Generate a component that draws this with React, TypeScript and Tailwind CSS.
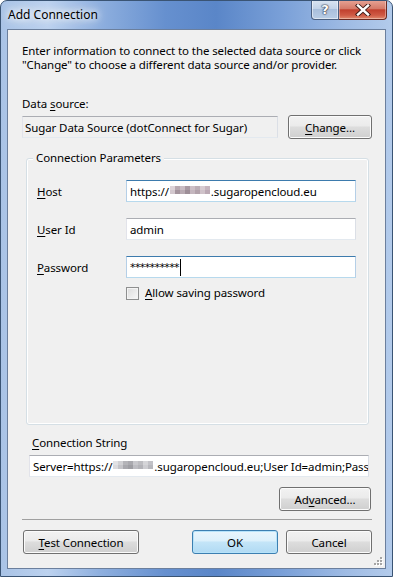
import React from "react";

const FONT = { fontFamily: '"Noto Sans", "Open Sans", sans-serif' };

function U({ children }: { children: React.ReactNode }) {
  return <span className="underline underline-offset-[2px] decoration-[1px]">{children}</span>;
}

function Btn({
  children,
  w,
  def,
}: {
  children: React.ReactNode;
  w: string;
  def?: boolean;
}) {
  return (
    <div
      className={
        "h-[24px] rounded-[3px] border flex items-center justify-center text-[11.5px] tracking-[-0.1px] leading-[15px] text-black " +
        w +
        (def
          ? " border-[#3c7fb1] bg-[linear-gradient(#e9f5fc_0%,#dcf0fb_45%,#c4e5f8_50%,#b0daf3_100%)] shadow-[inset_0_0_0_1px_#b6e3fa]"
          : " border-[#707070] bg-[linear-gradient(#f2f2f2_0%,#ebebeb_45%,#dddddd_50%,#cfcfcf_100%)] shadow-[inset_0_0_0_1px_#fbfbfb]")
      }
    >
      <span>{children}</span>
    </div>
  );
}

function Blur({ cols }: { cols: string[][] }) {
  return (
    <span className="inline-flex flex-col align-middle mx-[1px] -mt-[2px]">
      {cols.map((row, i) => (
        <span key={i} className="flex">
          {row.map((c, j) => (
            <span key={j} className="w-[5px] h-[4px]" style={{ background: c }} />
          ))}
        </span>
      ))}
    </span>
  );
}

const hostBlur = [
  ["#ddd3d8", "#b8a9b1", "#c9bcc3", "#a99aa3", "#cdbfc6", "#bcaeb6", "#d7cbd1", "#c6b5bf"],
  ["#d3c8ce", "#a4949d", "#b8aab2", "#9d8e97", "#c4b6be", "#b2a2ab", "#cfc2c9", "#bba9b4"],
];
const connBlur = [
  ["#e2e2e4", "#d0d0d3", "#b4b4b8", "#a9a9ae", "#c8c8cc", "#bdbdc1", "#d5d5d8", "#c2c2c7"],
  ["#dadadd", "#c4c4c8", "#a8a8ad", "#9e9ea3", "#bdbdc2", "#b3b3b8", "#cdcdd1", "#b8b8bd"],
];

const txt = "text-[11.5px] tracking-[-0.1px] leading-[15px]";

const inputCls =
  "h-[22px] border border-t-[#abadb3] border-l-[#e2e3ea] border-r-[#dbdfe6] border-b-[#e3e9ef] bg-white flex items-center px-[3px] text-[11.5px] tracking-[-0.1px] leading-[15px] text-black whitespace-nowrap overflow-hidden";
const focusCls =
  "h-[22px] border border-t-[#3d7bad] border-l-[#b5cfe7] border-r-[#b5cfe7] border-b-[#b7d9ed] bg-white flex items-center px-[3px] text-[11.5px] tracking-[-0.1px] leading-[15px] text-black whitespace-nowrap overflow-hidden";

export default function App() {
  return (
    <div
      className="w-[393px] h-[577px] overflow-hidden rounded-t-[7px] border border-[#3a5474] bg-[linear-gradient(90deg,#a9c3e6_0%,#bcd2ef_12%,#8fb0df_25%,#6690cf_42%,#5a86c8_55%,#7aa0d8_72%,#9ebbe4_88%,#b3cbeb_100%)] flex flex-col relative"
      style={FONT}
    >
      {/* title bar */}
      <div className="h-[28px] flex items-center pl-[7px] shrink-0">
        <span className="text-[12px] leading-[15px] text-black mt-[-1px] [text-shadow:0_0_6px_#ffffff,0_0_10px_#ffffff,0_0_14px_#ffffff]">
          Add Connection
        </span>
      </div>
      {/* caption buttons */}
      <div className="absolute top-[-1px] right-[5px] flex h-[20px]">
        <div className="w-[28px] h-[20px] border border-[#4a5f80] border-t-0 rounded-bl-[4px] bg-[linear-gradient(#dbe5f2_0%,#c3d3e8_45%,#a9bfdc_50%,#b9cde6_100%)] shadow-[inset_0_0_0_1px_rgba(255,255,255,0.5)] flex items-center justify-center">
          <span
            className="text-[13px] font-bold leading-none text-white mt-[-1px]"
            style={{ fontFamily: '"DejaVu Sans", sans-serif', textShadow: "0 0 1px #334, 0 0 1px #334, 0 0 2px #334" }}
          >
            ?
          </span>
        </div>
        <div className="w-[48px] h-[20px] border border-[#6b2a22] border-t-0 border-l-0 rounded-br-[4px] bg-[linear-gradient(#e8a597_0%,#d57a69_45%,#c1402e_52%,#cf5a45_80%,#e08a6e_100%)] shadow-[inset_0_0_0_1px_rgba(255,255,255,0.35)] flex items-center justify-center">
          <svg width="16" height="12" viewBox="0 0 16 12">
            <path d="M3 1.5 L13 10.5 M13 1.5 L3 10.5" stroke="#3b1a16" strokeWidth="4.2" strokeLinecap="square" />
            <path d="M3 1.5 L13 10.5 M13 1.5 L3 10.5" stroke="#ffffff" strokeWidth="2.4" strokeLinecap="square" />
          </svg>
        </div>
      </div>
      <div className="flex-1 min-h-0 px-[6px] pb-[7px] flex">
        <div className="flex-1 min-w-0 overflow-hidden border border-[#6b7f9d] bg-[#f0f0f0] flex flex-col pl-[14px] pr-[13px] relative text-black">
          <div className="mt-[14px] text-[11.5px] tracking-[-0.1px] leading-[14px] whitespace-nowrap">
            <div>Enter information to connect to the selected data source or click</div>
            <div>"Change" to choose a different data source and/or provider.</div>
          </div>
          <div className={"mt-[24px] " + txt}>
            Data <U>s</U>ource:
          </div>
          <div className="mt-[4px] flex items-start">
            <div className={"mt-[1px] w-[256px] h-[22px] border border-t-[#abadb3] border-l-[#e2e3ea] border-r-[#dbdfe6] border-b-[#e3e9ef] bg-[#f0f0f0] flex items-center px-[2px] whitespace-nowrap overflow-hidden " + txt}>
              Sugar Data Source (dotConnect for Sugar)
            </div>
            <div className="ml-auto">
              <Btn w="w-[84px]">
                <U>C</U>hange...
              </Btn>
            </div>
          </div>
          {/* group box */}
          <div className="mt-[19px] ml-[4px] mr-[3px] h-[267px] shrink-0 rounded-[3px] border border-[#d5dfe5] shadow-[inset_0_0_0_1px_#ffffff] relative pl-[10px] pr-[11px] pt-[21px]">
            <div className={"absolute top-[-9px] left-[6px] px-[3px] bg-[#f0f0f0] " + txt}>
              Connection Parameters
            </div>
            {[
              { label: <><U>H</U>ost</>, focus: true, value: "host" },
              { label: <><U>U</U>ser Id</>, value: "admin" },
              { label: <><U>P</U>assword</>, focus: true, value: "pwd" },
            ].map((r, i) => (
              <div key={i} className={"flex items-center " + (i > 0 ? "mt-[16px]" : "")}>
                <div className={"w-[89px] " + txt}>{r.label}</div>
                <div className={"w-[230px] " + (r.focus ? focusCls : inputCls)}>
                  {r.value === "host" && (
                    <>
                      https://
                      <Blur cols={hostBlur} />
                      .sugaropencloud.eu
                    </>
                  )}
                  {r.value === "admin" && "admin"}
                  {r.value === "pwd" && (
                    <>
                      <span className="text-[11px] tracking-[-0.6px]" style={{ fontFamily: '"DejaVu Sans", sans-serif' }}>
                        **********
                      </span>
                      <span className="inline-block w-[1px] h-[17px] bg-black ml-[1px]" />
                    </>
                  )}
                </div>
              </div>
            ))}
            <div className="mt-[9px] ml-[89px] flex items-center">
              <div className="w-[13px] h-[13px] border border-[#8e8f8f] bg-[linear-gradient(135deg,#dcdcdc,#f8f8f8)] shadow-[inset_0_0_0_1px_#f4f4f4]" />
              <div className={"ml-[6px] -mt-[2px] " + txt}>
                <U>A</U>llow saving password
              </div>
            </div>
          </div>
          <div className={"mt-[10px] ml-[10px] " + txt}>
            <U>C</U>onnection String
          </div>
          <div className={"mt-[5px] ml-[7px] mr-[3px] shrink-0 " + inputCls + " px-[2px]"}>
            Server=https://
            <Blur cols={connBlur} />
            .sugaropencloud.eu;User Id=admin;Password=**********
          </div>
          <div className="mt-[10px] flex justify-end">
            <Btn w="w-[92px] mr-[1px]">
              Ad<U>v</U>anced...
            </Btn>
          </div>
          <div className="mt-[8px] h-[1px] shrink-0 bg-[#a0a0a0]" />
          <div className="mt-[10px] flex items-center">
            <div className="ml-[1px]">
              <Btn w="w-[116px]">
                <U>T</U>est Connection
              </Btn>
            </div>
            <div className="ml-auto flex gap-[8px]">
              <Btn w="w-[86px]" def>
                OK
              </Btn>
              <Btn w="w-[86px]">Cancel</Btn>
            </div>
          </div>
          {/* resize grip */}
          <svg className="absolute right-[2px] bottom-[2px]" width="10" height="10" viewBox="0 0 10 10">
            {[
              [7, 1], [4, 4], [7, 4], [1, 7], [4, 7], [7, 7],
            ].map(([x, y], i) => (
              <g key={i}>
                <rect x={x + 1} y={y + 1} width="2" height="2" fill="#ffffff" />
                <rect x={x} y={y} width="2" height="2" fill="#a5a5a5" />
              </g>
            ))}
          </svg>
        </div>
      </div>
    </div>
  );
}
